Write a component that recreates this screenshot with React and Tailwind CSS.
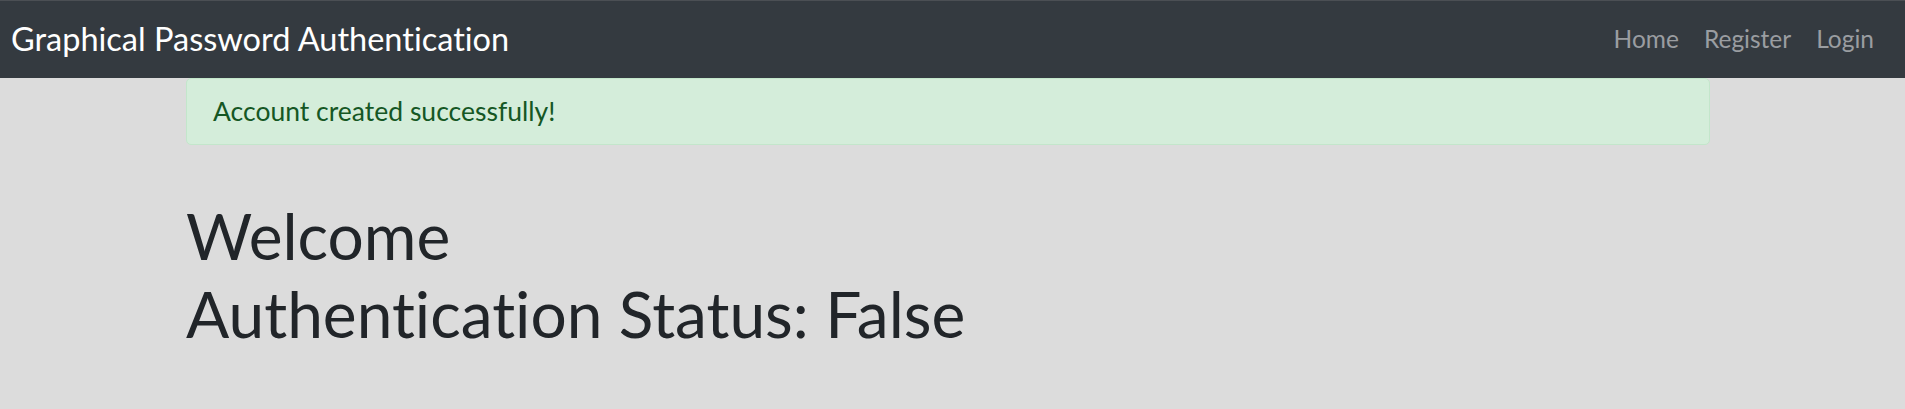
export default function App() {
  return (
    <div className="min-h-[409px] bg-[#dcdcdc] font-['Lato',sans-serif] [font-variant-ligatures:none]">
      <nav className="h-[78px] bg-[#343a40] border-t border-[#4b4f54] flex items-center justify-between pl-[11px] pr-[31px]">
        <span className="text-[32.5px] text-white leading-none">Graphical Password Authentication</span>
        <div className="flex items-center gap-[25px] text-[24.5px] text-[#9a9da1] leading-none">
          <span>Home</span>
          <span>Register</span>
          <span>Login</span>
        </div>
      </nav>
      <div className="ml-[186px] w-[1524px]">
        <div className="h-[67px] rounded-[5px] border border-[#c3e6cb] bg-[#d4edda] text-[#155724] text-[26.5px] flex items-center pl-[26px]">
          Account created successfully!
        </div>
        <div className="pt-[52px] text-[#212529] text-[64px] leading-[78px]">
          <div>Welcome</div>
          <div>Authentication Status: False</div>
        </div>
      </div>
    </div>
  );
}
